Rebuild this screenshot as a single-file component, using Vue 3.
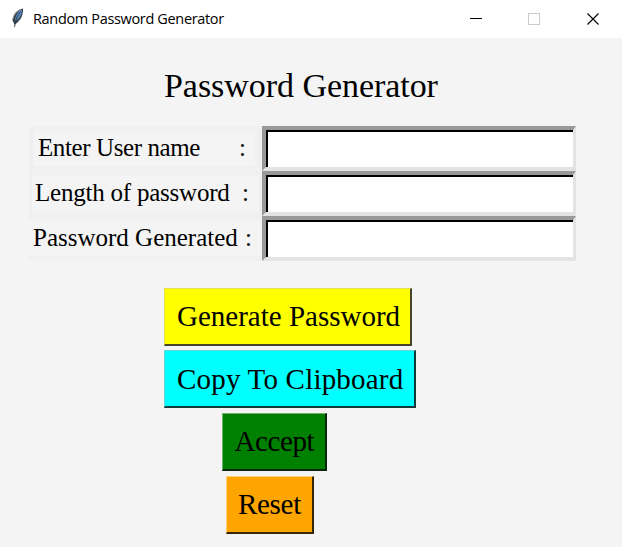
<script setup>
const fields = [
  { label: 'Enter User name', cls: 'name' },
  { label: 'Length of password', cls: 'length' },
  { label: 'Password Generated', cls: 'result' },
]
const actions = [
  { text: 'Generate Password', cls: 'generate' },
  { text: 'Copy To Clipboard', cls: 'copy' },
  { text: 'Accept', cls: 'accept' },
  { text: 'Reset', cls: 'reset' },
]
</script>

<template>
  <div class="window">
    <header class="titlebar">
      <svg class="feather" width="14" height="20" viewBox="0 0 14 20">
        <path d="M12 .5C7 1 1.5 6 1.5 12.5l2 4C8.5 14 12.5 8 12 .5Z" fill="#39424c" />
        <path d="M11 1.500C7 3 4.500 7 4 13.500 8.500 11 11 6 11 1.500Z" fill="#5b8fcb" />
        <path d="M9.500 3.500C6.500 7 4.500 12 3.500 19" fill="none" stroke="#26303b" stroke-width=".9" />
        <path d="M9.500 1.500C5.500 3.500 2.500 7 2 11" fill="none" stroke="#a3a9b0" stroke-width="1" />
      </svg>
      <span class="caption">Random Password Generator</span>
      <svg class="controls" width="142" height="38" viewBox="0 0 142 38" fill="none" shape-rendering="crispEdges">
        <path d="M0 18.5h12" stroke="#000" />
        <rect x="58.5" y="13.5" width="11" height="11" stroke="#ccc" />
        <path d="M117.500 13.500l11 11M128.500 13.500l-11 11" stroke="#000" stroke-width="1.1" shape-rendering="auto" />
      </svg>
    </header>
    <main>
      <h1>Password Generator</h1>
      <div class="form">
        <div v-for="f in fields" :key="f.cls" class="row">
          <div class="cell">
            <label :class="f.cls" :for="f.cls"><span class="text">{{ f.label }}</span><span>:</span></label>
          </div>
          <div class="entry"><input :id="f.cls" type="text" /></div>
        </div>
      </div>
      <div class="actions">
        <button v-for="a in actions" :key="a.cls" :class="a.cls"><span>{{ a.text }}</span></button>
      </div>
    </main>
  </div>
</template>

<style>
body { background: #f4f4f4; }
</style>

<style scoped>
* { box-sizing: border-box; }
.window {
  width: 622px;
  height: 547px;
  overflow: hidden;
  background: #f4f4f4;
  color: #000;
  font-family: "Liberation Serif", "Times New Roman", serif;
}
.titlebar {
  height: 38px;
  display: flex;
  align-items: center;
  background: #fff;
  padding-left: 10.5px;
}
.feather { margin-right: 8.5px; margin-top: -3px; }
.caption {
  font: 14.5px/20px "Open Sans", "Segoe UI", sans-serif;
  letter-spacing: -0.34px;
  white-space: nowrap;
}
.controls { margin-left: auto; margin-right: 10px; }
h1 {
  margin: 0 0 0 164px;
  padding-top: 28px;
  height: 88px;
  font-size: 34px;
  line-height: 40px;
  font-weight: 400;
  letter-spacing: -0.05px;
  white-space: nowrap;
}
.form { margin-left: 29px; width: 547px; }
.row { display: flex; height: 45px; }
.cell {
  width: 233px;
  padding-top: 5px;
  background: #f0f0f0;
}
label {
  display: flex;
  justify-content: space-between;
  height: 35px;
  background: #f4f4f4;
  font-size: 25px;
  line-height: 33px;
  white-space: nowrap;
}
.name { margin: 0 7px 0 5px; padding: 0 9px 0 4px; }
.name .text { letter-spacing: -0.4px; }
.length { margin: 0 3px; padding: 0 10px 0 3px; }
.length .text { letter-spacing: -0.22px; }
.result { margin-right: 1px; padding: 0 9px 0 4px; }
.entry {
  width: 314px;
  border: solid;
  border-width: 4px 3px 4px 4px;
  border-color: #999 #e3e3e3 #e3e3e3 #999;
}
input {
  display: block;
  width: 100%;
  height: 100%;
  margin: 0;
  padding: 0 4px;
  border: 0 solid #000;
  border-width: 2px 0 0 2px;
  border-radius: 0;
  background: #fff;
  outline: 0;
  font: 25px "Liberation Serif", serif;
}
.actions {
  display: flex;
  flex-direction: column;
  align-items: flex-start;
  gap: 5px;
  margin: 27px 0 0 164px;
}
button {
  height: 58px;
  padding: 0 0 0 12px;
  border: solid;
  border-width: 1px 2px 2px 1px;
  border-radius: 0;
  color: #000;
  font: 29px/53px "Liberation Serif", serif;
  text-align: left;
  white-space: nowrap;
}
.generate { width: 248px; background: #ff0; border-color: #e3e34c #45452c #45452c #e3e34c; }
.copy { width: 252px; margin-top: -1px; padding-top: 2px; background: #0ff; border-color: #62d8d8 #113c3c #113c3c #62d8d8; letter-spacing: 0.2px; }
.accept { width: 105px; margin-left: 58px; padding-left: 11.5px; background: #008000; border-color: #70b370 #062606 #062606 #70b370; letter-spacing: -0.4px; }
.reset { width: 88px; margin-left: 61.5px; padding-left: 11.5px; background: #ffa500; border-color: #ffcf70 #35270c #35270c #ffcf70; letter-spacing: -0.3px; }
</style>
